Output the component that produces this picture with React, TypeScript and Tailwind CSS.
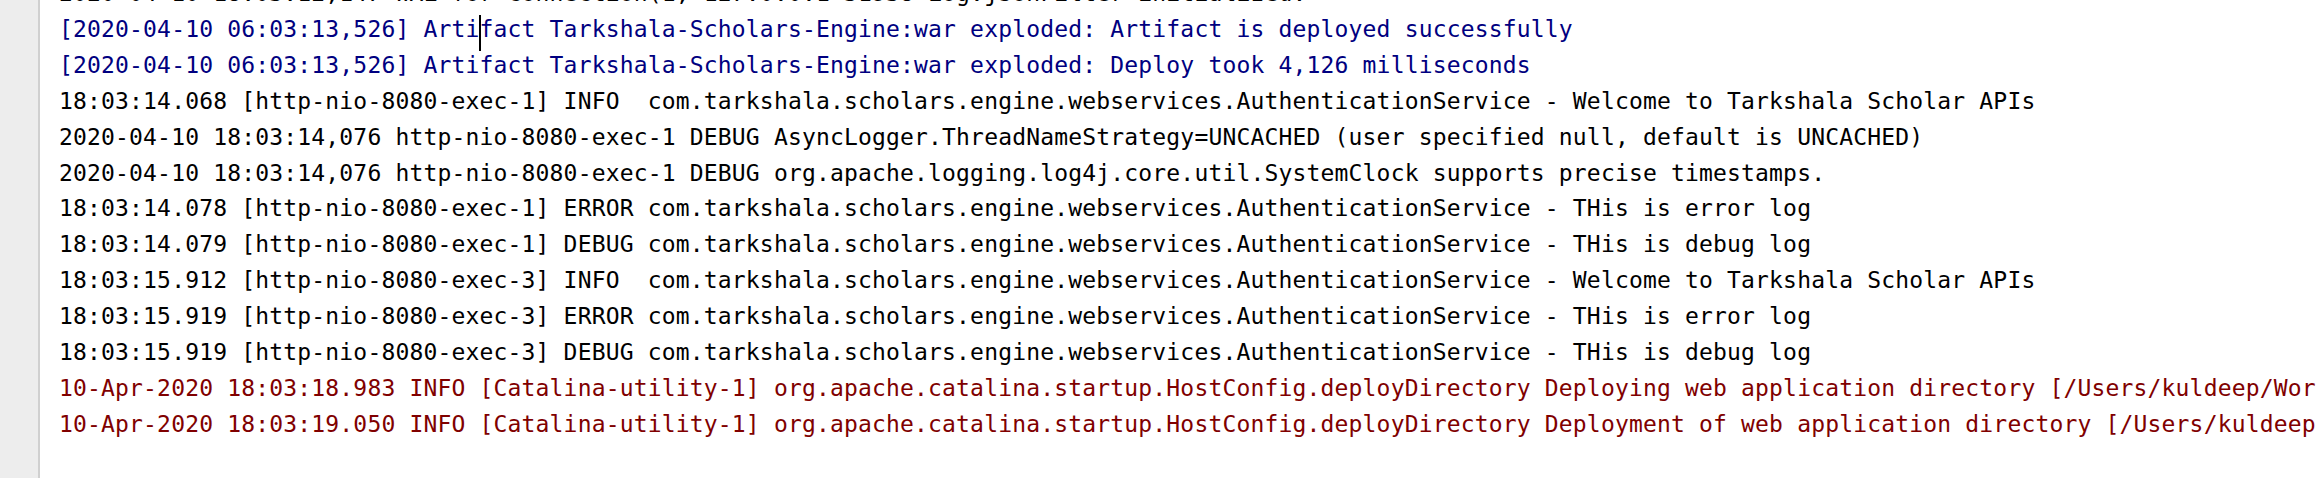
const lines: { text: string; tone: "black" | "blue" | "red" }[] = [
  { text: "2020-04-10 18:03:12,147 WAL for connection(1, 127.0.0.1 51938 Log.jsonFilter initialized.", tone: "black" },
  { text: "[2020-04-10 06:03:13,526] Artifact Tarkshala-Scholars-Engine:war exploded: Artifact is deployed successfully", tone: "blue" },
  { text: "[2020-04-10 06:03:13,526] Artifact Tarkshala-Scholars-Engine:war exploded: Deploy took 4,126 milliseconds", tone: "blue" },
  { text: "18:03:14.068 [http-nio-8080-exec-1] INFO  com.tarkshala.scholars.engine.webservices.AuthenticationService - Welcome to Tarkshala Scholar APIs", tone: "black" },
  { text: "2020-04-10 18:03:14,076 http-nio-8080-exec-1 DEBUG AsyncLogger.ThreadNameStrategy=UNCACHED (user specified null, default is UNCACHED)", tone: "black" },
  { text: "2020-04-10 18:03:14,076 http-nio-8080-exec-1 DEBUG org.apache.logging.log4j.core.util.SystemClock supports precise timestamps.", tone: "black" },
  { text: "18:03:14.078 [http-nio-8080-exec-1] ERROR com.tarkshala.scholars.engine.webservices.AuthenticationService - THis is error log", tone: "black" },
  { text: "18:03:14.079 [http-nio-8080-exec-1] DEBUG com.tarkshala.scholars.engine.webservices.AuthenticationService - THis is debug log", tone: "black" },
  { text: "18:03:15.912 [http-nio-8080-exec-3] INFO  com.tarkshala.scholars.engine.webservices.AuthenticationService - Welcome to Tarkshala Scholar APIs", tone: "black" },
  { text: "18:03:15.919 [http-nio-8080-exec-3] ERROR com.tarkshala.scholars.engine.webservices.AuthenticationService - THis is error log", tone: "black" },
  { text: "18:03:15.919 [http-nio-8080-exec-3] DEBUG com.tarkshala.scholars.engine.webservices.AuthenticationService - THis is debug log", tone: "black" },
  { text: "10-Apr-2020 18:03:18.983 INFO [Catalina-utility-1] org.apache.catalina.startup.HostConfig.deployDirectory Deploying web application directory [/Users/kuldeep/Workspace/tarkshala/apache-tomcat/webapps/manager]", tone: "red" },
  { text: "10-Apr-2020 18:03:19.050 INFO [Catalina-utility-1] org.apache.catalina.startup.HostConfig.deployDirectory Deployment of web application directory [/Users/kuldeep/Workspace/tarkshala/apache-tomcat/webapps/manager] has finished", tone: "red" },
];

const toneClass = {
  black: "text-[#000000]",
  blue: "text-[#000080]",
  red: "text-[#800000]",
};

const ConsoleOutput = () => {
  return (
    <div className="h-[478px] w-full flex bg-white overflow-hidden">
      <div className="w-[40px] shrink-0 bg-[#ededed] border-r-2 border-[#d0d0d0]" />
      <div className="flex-1 overflow-hidden pl-[19px]">
        <div
          className="mt-[-24px] flex flex-col text-[23px] leading-[35.9px] tracking-[0.17px] whitespace-pre"
          style={{ fontFamily: '"DejaVu Sans Mono", "Liberation Mono", monospace' }}
        >
          {lines.map((line, i) =>
            i === 1 ? (
              <div key={i} className={toneClass[line.tone]}>
                {line.text.slice(0, 30)}
                <span className="relative">
                  <span className="absolute left-[-1px] top-[-1px] h-[36px] w-[2px] bg-black" />
                </span>
                {line.text.slice(30)}
              </div>
            ) : (
              <div key={i} className={toneClass[line.tone]}>
                {line.text}
              </div>
            )
          )}
        </div>
      </div>
    </div>
  );
};

export default function App() {
  return <ConsoleOutput />;
}
